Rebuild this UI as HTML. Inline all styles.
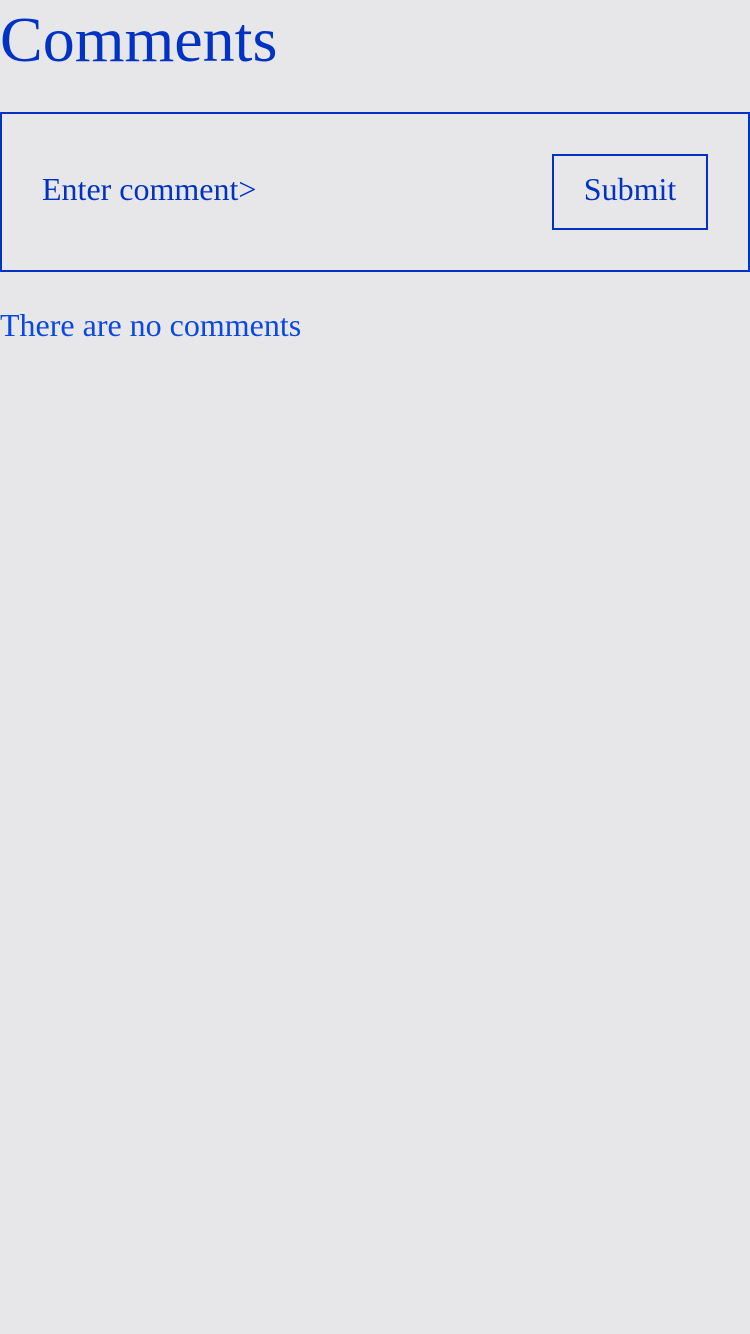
<!DOCTYPE html>
<html><head><style>
body{margin:0;background:#e7e7ea;font-family:"Liberation Serif",serif;width:750px;height:1334px;overflow:hidden}
h1{position:absolute;left:0;top:0;margin:0;font-weight:normal;font-size:64px;line-height:80px;color:#0033c4}
.box{position:absolute;left:0;top:112px;width:746px;height:156px;border:2px solid #0033c4}
.ph{position:absolute;left:40px;top:55px;font-size:32px;line-height:40px;color:#0033c4}
.btn{position:absolute;left:550px;top:40px;width:152px;height:72px;border:2px solid #0033c4;font-size:32px;line-height:66px;text-align:center;color:#0033c4}
.no{position:absolute;left:0;top:305px;font-size:32px;line-height:40px;color:#0a48e4}
</style></head><body>
<h1>Comments</h1>
<div class="box"><div class="ph">Enter comment&gt;</div><div class="btn">Submit</div></div>
<div class="no">There are no comments</div>
</body></html>
